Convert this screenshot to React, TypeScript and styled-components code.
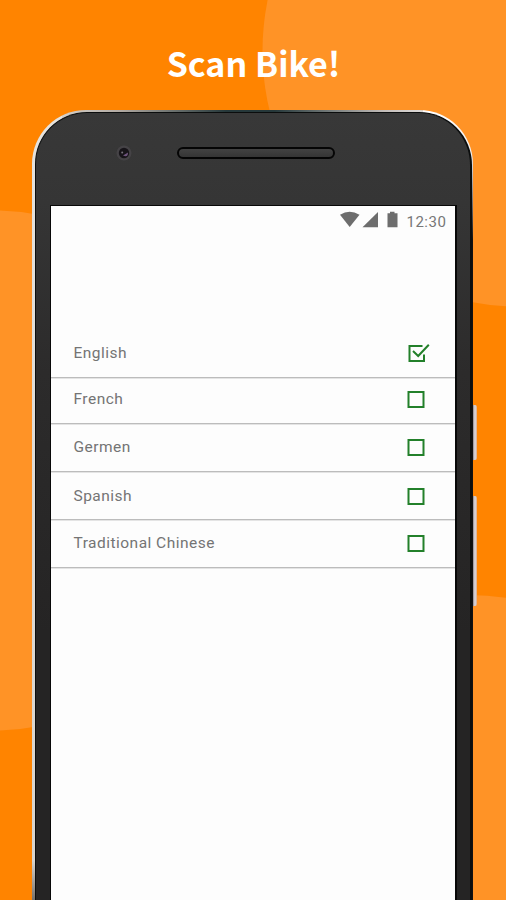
import React from "react";
import styled, { createGlobalStyle } from "styled-components";

const GlobalStyle = createGlobalStyle`
  *, *::before, *::after { box-sizing: border-box; }
  html, body { margin: 0; padding: 0; overflow: hidden; background: #ff8400; }
`;

const Page = styled.main`
  position: relative;
  width: 506px;
  height: 900px;
  overflow: hidden;
  background: #ff8400;
  display: flex;
  flex-direction: column;
  font-family: Roboto, sans-serif;
`;

const Backdrop = styled.svg`
  position: absolute;
  inset: 0;
`;

const Title = styled.h1`
  position: relative;
  flex: none;
  margin: 0;
  height: 110px;
  padding-top: 36px;
  padding-left: 1px;
  text-align: center;
  font: 700 34px/54px "Noto Sans CJK SC", "Noto Sans", sans-serif;
  color: #fff;
`;

const PhoneRow = styled.div`
  position: relative;
  flex: 1;
  display: flex;
  padding-left: 32px;
`;

const Frame = styled.div`
  width: 440.5px;
  height: 790px;
  padding: 2px 1px 0 2.5px;
  border-radius: 54px 54px 0 0;
  background:
    linear-gradient(#e6e3de, #d9d4cd 95%, #77716a) left / 30px 100% no-repeat,
    linear-gradient(#ffffff 0, #eeeeee 45px, #77777a 90px, #111 130px) right / 50px 100% no-repeat,
    linear-gradient(90deg, #e6e3de 0, #b2aaa2 20%, #26383a 44%, #26383a 55%, #c4beba 80%, #fff 100%);
`;

const Body = styled.div`
  height: 100%;
  padding: 0 14px 0 14.5px;
  border: solid #0b0d0d;
  border-width: 1px 2px 0 1px;
  border-radius: 52px 53px 0 0;
  background: linear-gradient(#383838, #353535 90px, #2c2b2b 260px, #252424 520px, #252424);
  display: flex;
  flex-direction: column;
`;

const Forehead = styled.div`
  flex: none;
  height: 92px;
  display: flex;
  align-items: flex-start;
  padding: 32px 0 0 66px;
`;

const Camera = styled.svg`
  width: 16px;
  height: 16px;
`;

const Speaker = styled.div`
  margin: 2px 0 0 45px;
  width: 158px;
  height: 12px;
  border: 2.5px solid #050505;
  border-radius: 6px;
  background: linear-gradient(#424242, #353535);
`;

const Screen = styled.section`
  flex: 1;
  margin: 0 -1.5px 0 0;
  border: solid #080808;
  border-width: 1px 2px 0 1px;
  background: #fdfdfd;
  display: flex;
  flex-direction: column;
`;

const StatusBar = styled.header`
  flex: none;
  height: 127px;
  padding: 5px 8.5px 0 0;
  display: flex;
  justify-content: flex-end;
  align-items: flex-start;
`;

const Clock = styled.time`
  width: 40px;
  margin-left: 6px;
  font-size: 15px;
  line-height: 22px;
  letter-spacing: 0.5px;
  color: #777;
  white-space: nowrap;
`;

const List = styled.ul`
  list-style: none;
  margin: 0;
  padding: 0;
`;

const Row = styled.li<{ $height: number; $drop: number }>`
  height: ${(p) => p.$height}px;
  padding: ${(p) => p.$drop}px 24.5px 0 22.5px;
  border-bottom: 1px solid #bcbcbc;
  box-shadow: 0 1px 0 #e4e4e4;
  display: flex;
  justify-content: space-between;
  align-items: flex-start;
`;

const Label = styled.span`
  font-size: 15.5px;
  line-height: 20px;
  letter-spacing: 0.48px;
  color: #747474;
`;

const Check = styled.svg`
  width: 25px;
  height: 20px;
  flex: none;
`;

const SideKeys = styled.div`
  display: flex;
  flex-direction: column;
  padding-top: 295px;
`;

const SideKey = styled.div<{ $height: number; $gap?: number }>`
  width: 4.5px;
  height: ${(p) => p.$height}px;
  margin-top: ${(p) => p.$gap ?? 0}px;
  border-radius: 0 2px 2px 0;
  background: linear-gradient(90deg, #8d8588, #dcd8dd 45%, #d5c8c8 75%, #e3a66c);
`;

const languages = [
  { name: "English", height: 45, drop: 10, checked: true },
  { name: "French", height: 46, drop: 11, checked: false },
  { name: "Germen", height: 48, drop: 13, checked: false },
  { name: "Spanish", height: 48, drop: 14, checked: false },
  { name: "Traditional Chinese", height: 48, drop: 13, checked: false },
];

function CheckIcon({ checked }: { checked: boolean }) {
  return (
    <Check viewBox="0 0 25 20" fill="none" stroke="#23802a" strokeWidth="2">
      {checked ? (
        <>
          <path d="M16.5 3H3.5V18H18V11.5" />
          <path d="M7 8L12.2 13L22.8 1.8" />
        </>
      ) : (
        <path d="M2.5 3H17.5V18H2.5Z" />
      )}
    </Check>
  );
}

function StatusIcons() {
  return (
    <svg width="62" height="18" viewBox="0 0 62 18" fill="#6d6d6d">
      <path d="M1 3.8Q10.5 -2.5 20.5 3.8L10.7 16Z" />
      <path d="M23.5 16.3L39 1V16.3Z" />
      <path d="M48.5 2.2H51V0.8H55.5V2.2H58.5V16.3H48.5Z" />
    </svg>
  );
}

export default function App() {
  return (
    <>
      <GlobalStyle />
      <Page>
        <Backdrop width="506" height="900" fill="#ff9326">
          <circle cx="518" cy="51" r="255.5" />
          <circle cx="-8" cy="470.5" r="260" />
          <circle cx="468" cy="855" r="260" />
        </Backdrop>
        <Title>Scan Bike!</Title>
        <PhoneRow>
          <Frame>
            <Body>
              <Forehead>
                <Camera viewBox="0 0 16 16">
                  <circle cx="8" cy="8" r="7.5" fill="#454346" />
                  <circle cx="8" cy="8" r="5.2" fill="#171419" />
                  <path d="M7 10.5L12 7.5Q12 13 7 10.5Z" fill="#6f557e" />
                  <circle cx="6.2" cy="7.5" r="1" fill="#77727c" />
                </Camera>
                <Speaker />
              </Forehead>
              <Screen>
                <StatusBar>
                  <StatusIcons />
                  <Clock>12:30</Clock>
                </StatusBar>
                <List>
                  {languages.map((l) => (
                    <Row key={l.name} $height={l.height} $drop={l.drop}>
                      <Label>{l.name}</Label>
                      <CheckIcon checked={l.checked} />
                    </Row>
                  ))}
                </List>
              </Screen>
            </Body>
          </Frame>
          <SideKeys>
            <SideKey $height={55} />
            <SideKey $height={110} $gap={36} />
          </SideKeys>
        </PhoneRow>
      </Page>
    </>
  );
}
